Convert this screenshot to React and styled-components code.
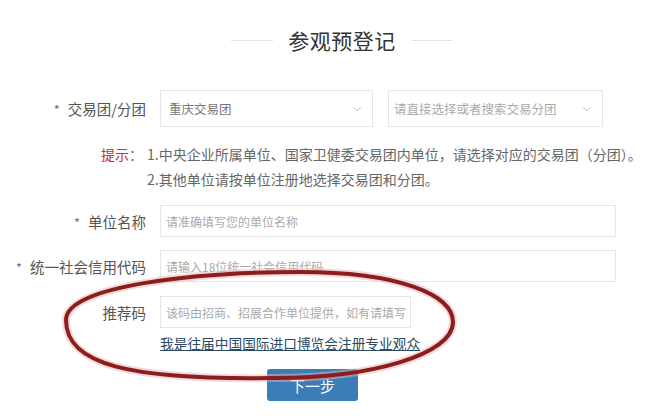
import React from 'react'
import styled, { createGlobalStyle } from 'styled-components'

const GlobalStyle = createGlobalStyle`
  body {
    margin: 0;
    background: #fff;
    font-family: "Noto Sans CJK SC", "Noto Sans", sans-serif;
  }
`

const Page = styled.div`
  position: relative;
  width: 647px;
  height: 416px;
  overflow: hidden;
  padding-top: 25px;
  box-sizing: border-box;
`

const TitleBar = styled.div`
  display: flex;
  align-items: center;
  justify-content: center;
  gap: 15px;
  height: 30px;
  margin-left: 37px;
`

const TitleLine = styled.span`
  width: 42px;
  height: 1px;
  background: #e2e2e2;
`

const Title = styled.h1`
  margin: 0;
  font-size: 21px;
  font-weight: 400;
  color: #333;
  letter-spacing: 0.5px;
`

const Form = styled.div`
  display: flex;
  flex-direction: column;
  margin-top: 35px;
`

const Row = styled.div`
  display: flex;
  align-items: center;
  gap: 14px;
  margin-top: ${p => p.top || 0}px;
`

const Label = styled.label`
  width: 146px;
  flex-shrink: 0;
  text-align: right;
  font-size: 14.5px;
  color: #555;
  white-space: nowrap;
`

const Star = styled.span`
  color: #777;
  margin-right: 8px;
  font-size: 13px;
`

const SelectBox = styled.div`
  display: flex;
  align-items: center;
  justify-content: space-between;
  box-sizing: border-box;
  width: ${p => p.w}px;
  height: 37px;
  margin-left: ${p => p.ml || 0}px;
  padding: 0 10px 0 ${p => p.pl || 8}px;
  border: 1px solid #e6e6e6;
  font-size: 12.5px;
  color: ${p => (p.filled ? '#777' : '#aaa')};
`

const Input = styled.div`
  box-sizing: border-box;
  width: ${p => p.w}px;
  height: 32px;
  display: flex;
  align-items: center;
  padding-left: 5px;
  border: 1px solid #e6e6e6;
  font-size: 12px;
  color: #aaa;
  white-space: nowrap;
  overflow: hidden;
`

const Hint = styled.div`
  display: flex;
  margin: 15px 0 0 101px;
  font-size: 14px;
  line-height: 25px;
  color: #666;
`

const HintTag = styled.span`
  width: 46px;
  flex-shrink: 0;
  white-space: nowrap;
  & b {
    font-weight: 400;
    color: #c9302c;
  }
`

const HintLines = styled.div`
  display: flex;
  flex-direction: column;
  white-space: nowrap;
`

const LinkRow = styled.div`
  margin: 4px 0 0 160px;
  line-height: 20px;
`

const Link = styled.a`
  font-size: 13.7px;
  color: #2b4a63;
  text-decoration: underline;
  cursor: pointer;
`

const Button = styled.button`
  width: 91px;
  height: 32px;
  margin: 16px 0 0 267px;
  border: none;
  border-radius: 3px;
  background: #3c7db8;
  color: #fff;
  font-family: inherit;
  font-size: 15px;
`

const Overlay = styled.svg`
  position: absolute;
  left: 0;
  top: 0;
  pointer-events: none;
`

function Chevron() {
  return (
    <svg width="10" height="6" viewBox="0 0 10 6">
      <path d="M1 1l4 4 4-4" fill="none" stroke="#c4c4c4" strokeWidth="1" />
    </svg>
  )
}

const circle =
  'M 66 320 C 66 285, 200 272, 300 272 C 400 272, 453 295, 453 322 C 453 355, 370 378, 275 378 C 130 380, 66 365, 66 320 Z'

export default function App() {
  return (
    <Page>
      <GlobalStyle />
      <TitleBar>
        <TitleLine />
        <Title>参观预登记</Title>
        <TitleLine />
      </TitleBar>
      <Form>
        <Row>
          <Label><Star>*</Star>交易团/分团</Label>
          <SelectBox w={213} filled>
            重庆交易团
            <Chevron />
          </SelectBox>
          <SelectBox w={215} ml={1} pl={5}>
            请直接选择或者搜索交易分团
            <Chevron />
          </SelectBox>
        </Row>
        <Hint>
          <HintTag><b>提示</b>：</HintTag>
          <HintLines>
            <span>1.中央企业所属单位、国家卫健委交易团内单位，请选择对应的交易团（分团）。</span>
            <span>2.其他单位请按单位注册地选择交易团和分团。</span>
          </HintLines>
        </Hint>
        <Row top={13}>
          <Label><Star>*</Star>单位名称</Label>
          <Input w={456}>请准确填写您的单位名称</Input>
        </Row>
        <Row top={13}>
          <Label><Star>*</Star>统一社会信用代码</Label>
          <Input w={456}>请输入18位统一社会信用代码</Input>
        </Row>
        <Row top={14}>
          <Label>推荐码</Label>
          <Input w={251}>该码由招商、招展合作单位提供，如有请填写</Input>
        </Row>
        <LinkRow>
          <Link>我是往届中国国际进口博览会注册专业观众</Link>
        </LinkRow>
        <div>
          <Button>下一步</Button>
        </div>
      </Form>
      <Overlay width="647" height="416" viewBox="0 0 647 416">
        <path d={circle} fill="none" stroke="#e8b4b4" strokeOpacity="0.5" strokeWidth="8" />
        <path d={circle} fill="none" stroke="#8c1d1d" strokeWidth="4" />
      </Overlay>
    </Page>
  )
}
